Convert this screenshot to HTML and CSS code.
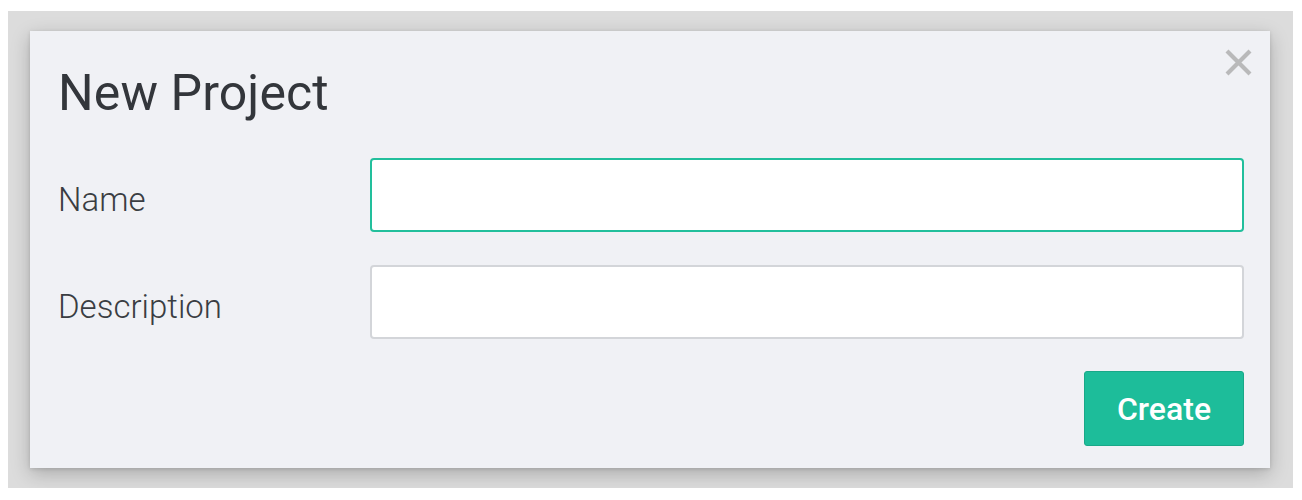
FILE: index.html
```html
<!DOCTYPE html>
<html>
<head>
<meta charset="utf-8">
<link rel="stylesheet" href="styles.css">
</head>
<body>
<div class="backdrop">
  <div class="modal">
    <button class="close" aria-label="Close">
      <svg width="29" height="27" viewBox="0 0 29 27"><path d="M3 2 L26 25 M26 2 L3 25" stroke="#b9b9ba" stroke-width="4.2" stroke-linecap="butt"/></svg>
    </button>
    <h1 class="title">New Project</h1>
    <form class="form">
      <label class="label" for="name">Name</label>
      <input class="input input-focus" id="name" type="text">
      <label class="label" for="desc">Description</label>
      <input class="input" id="desc" type="text">
      <div class="actions">
        <button type="button" class="btn">Create</button>
      </div>
    </form>
  </div>
</div>
</body>
</html>
```

FILE: styles.css
```css
* { box-sizing: border-box; }
html, body { margin: 0; padding: 0; background: #ffffff; }
body { font-family: Roboto, "Liberation Sans", sans-serif; }

.backdrop {
  margin: 11px 9px 0 8px;
  height: 477px;
  background: #dcdcdc;
  padding: 20px 23px 0 22px;
}

.modal {
  position: relative;
  width: 1240px;
  height: 437px;
  background: #f0f1f5;
  box-shadow: 0 6px 18px rgba(0,0,0,0.22), 0 1px 4px rgba(0,0,0,0.12);
  padding: 34px 26px 22px 28px;
}

.close {
  position: absolute;
  top: 18px;
  right: 17px;
  width: 29px;
  height: 27px;
  padding: 0;
  border: 0;
  background: transparent;
  display: flex;
}

.title {
  margin: 0;
  font-size: 50px;
  line-height: 56px;
  font-weight: 400;
  color: #33363b;
  letter-spacing: 0.1px;
}

.form {
  margin-top: 37px;
  display: grid;
  grid-template-columns: 312px 1fr;
  row-gap: 33px;
}

.label {
  display: flex;
  align-items: center;
  padding-top: 9px;
  font-size: 33px;
  font-weight: 300;
  color: #3a3d42;
}

.input {
  height: 74px;
  width: 100%;
  border: 2px solid #d3d5d9;
  border-radius: 4px;
  background: #ffffff;
  outline: none;
  font: inherit;
}

.input-focus { border-color: #22bf9c; }

.actions {
  grid-column: 1 / 3;
  display: flex;
  justify-content: flex-end;
  margin-top: -1px;
}

.btn {
  width: 160px;
  height: 75px;
  background: #1dbd9a;
  border: 1px solid #19a888;
  border-radius: 3px;
  color: #ffffff;
  font-family: Roboto, "Liberation Sans", sans-serif;
  font-size: 32px;
  font-weight: 500;
  padding: 0;
}
```
